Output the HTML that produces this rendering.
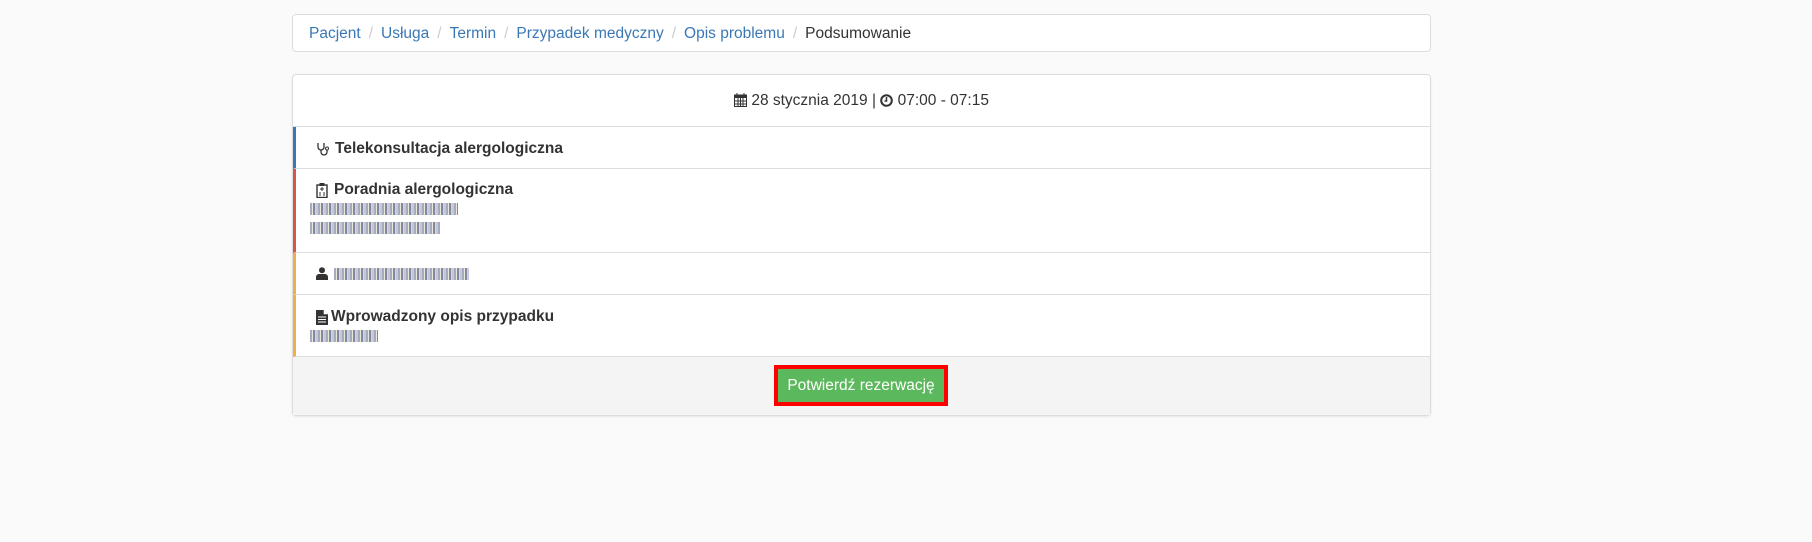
<!DOCTYPE html>
<html><head><meta charset="utf-8"><style>
*{box-sizing:border-box;margin:0;padding:0}
body{width:1812px;height:542px;background:#fafafa;font-family:"Liberation Sans",sans-serif;font-size:15.5px;color:#333;position:relative;overflow:hidden}
.bc{position:absolute;left:292px;top:14px;width:1139px;height:38px;background:#fff;border:1px solid #ddd;border-radius:4px;padding:0 16px;line-height:37px;font-size:15.5px}
.bc a{color:#3a78b5;text-decoration:none}
.bc .s{color:#ccc;padding:0 8px}
.p{position:absolute;left:292px;top:74px;width:1139px;height:342px;background:#fff;border:1px solid #ddd;border-radius:4px;box-shadow:0 1px 2px rgba(0,0,0,.08)}
.hd{height:52px;border-bottom:1px solid #ddd;text-align:center;line-height:52px}
.r{position:absolute;left:0;width:1137px;border-bottom:1px solid #ddd;padding-left:20px}
.t{font-weight:bold;display:flex;align-items:center;gap:6px}
.blur{display:inline-block;height:12px;background:repeating-linear-gradient(90deg,#8a8fa8 0 2px,#e4e0d0 2px 3px,#5a6080 3px 5px,#d7c6a0 5px 6px,#b0b8d0 6px 8px);opacity:.75}
.ft{position:absolute;left:0;top:282px;width:1137px;height:58px;background:#f4f4f4}
.btn{position:absolute;left:481px;top:8px;width:174px;height:41px;background:#5cb85c;border:4px solid #f00;color:#fff;text-align:center;line-height:33px;font-size:15.5px}
</style></head><body>
<div class="bc"><a>Pacjent</a><span class="s">/</span><a>Usługa</a><span class="s">/</span><a>Termin</a><span class="s">/</span><a>Przypadek medyczny</a><span class="s">/</span><a>Opis problemu</a><span class="s">/</span>Podsumowanie</div>
<div class="p">
<div class="hd"><svg width="13" height="14" viewBox="0 0 13 14" style="vertical-align:-2px"><rect x="0.5" y="2" width="12" height="11.5" fill="none" stroke="#333"/><rect x="0.5" y="2" width="12" height="3" fill="#333"/><path d="M3 0v3M10 0v3M0 8h13M0 11h13M4 5v9M6.5 5v9M9 5v9" stroke="#333"/></svg> 28 stycznia 2019 | <svg width="13" height="13" viewBox="0 0 13 13" style="vertical-align:-2px"><circle cx="6.5" cy="6.5" r="5.3" fill="none" stroke="#333" stroke-width="2"/><path d="M6.5 3v4h-2" fill="none" stroke="#333" stroke-width="1.5"/></svg> 07:00 - 07:15</div>
<div class="r" style="top:52px;height:42px;border-left:3px solid #337ab7;padding-top:13px"><div class="t"><svg width="13" height="14" viewBox="0 0 13 14"><path d="M2 1v4a3 3 0 0 0 6 0V1M5 8v2a3 3 0 0 0 6 0V8" fill="none" stroke="#333" stroke-width="1.3"/><circle cx="11" cy="6.5" r="1.5" fill="none" stroke="#333"/></svg>Telekonsultacja alergologiczna</div></div>
<div class="r" style="top:94px;height:84px;border-left:3px solid #d9534f;padding-top:12px"><div class="t"><svg width="12" height="15" viewBox="0 0 12 15"><rect x="1" y="2" width="10" height="12.5" fill="none" stroke="#333" stroke-width="1.4"/><rect x="3.5" y="0" width="5" height="3" fill="#333"/><path d="M4 6h4M6 4v4M3 10h2M7 10h2M3 12h2M7 12h2" stroke="#333"/></svg>Poradnia alergologiczna</div>
<div style="margin-top:3px;margin-left:-6px;height:12px"><span class="blur" style="width:148px"></span></div>
<div style="margin-top:7px;margin-left:-6px;height:12px"><span class="blur" style="width:130px"></span></div></div>
<div class="r" style="top:178px;height:42px;border-left:3px solid #f0ad4e;padding-top:14px"><div class="t"><svg width="12" height="13" viewBox="0 0 12 13"><circle cx="6" cy="3.2" r="3" fill="#333"/><path d="M0 13v-3a3 3 0 0 1 3-3h6a3 3 0 0 1 3 3v3z" fill="#333"/></svg><span class="blur" style="width:135px"></span></div></div>
<div class="r" style="top:220px;height:62px;border-left:3px solid #f0ad4e;padding-top:13px"><div class="t" style="gap:3px"><svg width="12" height="15" viewBox="0 0 12 15"><path d="M0 0h8l4 4v11H0z" fill="#333"/><path d="M8 0v4h4" fill="#fff" stroke="#fff" stroke-width=".6"/><path d="M2 7h8M2 9.5h8M2 12h8" stroke="#fff"/></svg>Wprowadzony opis przypadku</div>
<div style="margin-top:3px;margin-left:-6px;height:12px"><span class="blur" style="width:68px"></span></div></div>
<div class="ft"><div class="btn">Potwierdź rezerwację</div></div>
</div>
</body></html>
